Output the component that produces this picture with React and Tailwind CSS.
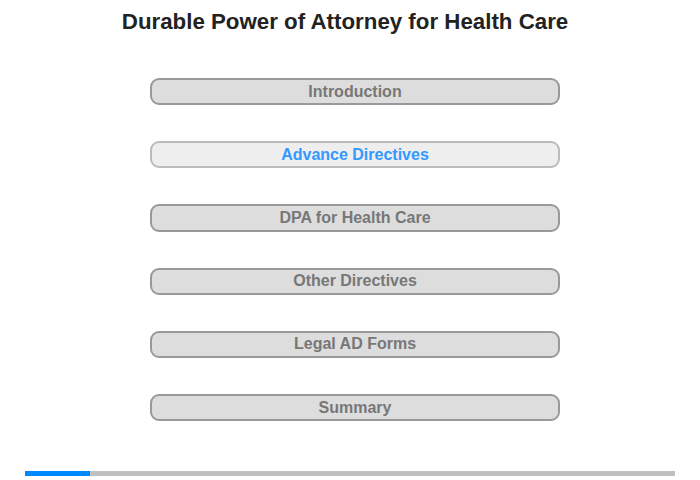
const ITEMS = [
  { label: 'Introduction' },
  { label: 'Advance Directives', active: true },
  { label: 'DPA for Health Care' },
  { label: 'Other Directives' },
  { label: 'Legal AD Forms' },
  { label: 'Summary' },
]

export default function App() {
  return (
    <div className="w-[700px] h-[480px] bg-white overflow-hidden" style={{ fontFamily: '"Liberation Sans", Arial, sans-serif' }}>
      <h1 className="pt-[9px] pr-[10px] text-center text-[22.3px] leading-[25px] font-bold text-[#222]">
        Durable Power of Attorney for Health Care
      </h1>

      <div className="mt-[44px] ml-[150px] w-[410px] flex flex-col gap-[36px]">
        {ITEMS.map(it => (
          <div
            key={it.label}
            className={
              it.active
                ? 'h-[27.2px] rounded-[9px] border-2 border-[#bbbbbb] bg-[#eeeeee] flex items-center justify-center text-[16px] font-bold text-[#3399ff]'
                : 'h-[27.2px] rounded-[9px] border-2 border-[#999999] bg-[#dddddd] flex items-center justify-center text-[16px] font-bold text-[#777777]'
            }
          >
            {it.label}
          </div>
        ))}
      </div>

      <div className="mt-[49.5px] ml-[25px] w-[650px] h-[5px] bg-[#c0c0c0] flex">
        <div className="w-[65px] h-full bg-[#0088ff]" />
      </div>
    </div>
  )
}
